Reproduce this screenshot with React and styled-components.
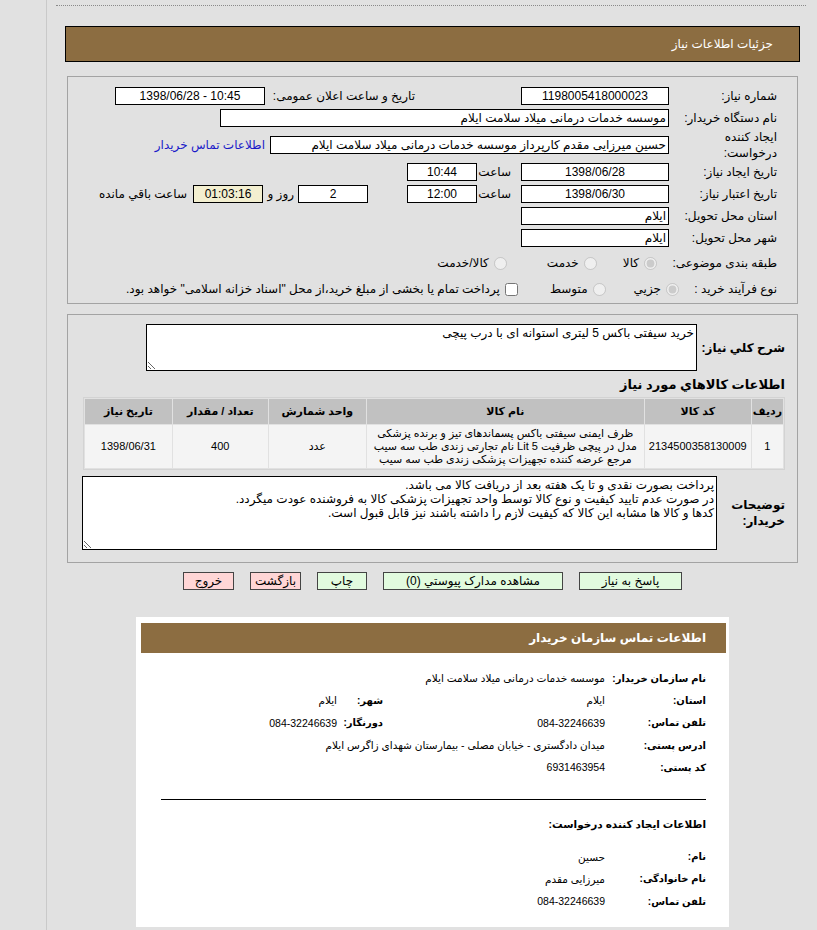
import React from 'react';
import styled, { createGlobalStyle } from 'styled-components';

const GlobalStyle = createGlobalStyle`
  body {
    margin: 0;
    background: #e1e1e1;
    font-family: "Liberation Sans", "DejaVu Sans", sans-serif;
    font-size: 12px;
    color: #000;
  }
`;

const Page = styled.div`
  margin-left: 46px;
  border-left: 1px solid #c9c9c9;
  min-height: 930px;
  padding: 5px 11px 8px 9px;
  box-sizing: border-box;
`;

const Dotted = styled.div`
  border-top: 1px dotted #8a8a8a;
`;

const Content = styled.div`
  margin: 0 8px 0 11px;
  direction: rtl;
`;

const TitleBar = styled.div`
  margin: 20px -2px 0 -2px;
  height: 34px;
  border: 1px solid #000;
  background: #8c6d41;
  color: #fff;
  display: flex;
  align-items: center;
  padding-right: 26px;
  font-size: 12px;
`;

const Panel = styled.div`
  margin-top: ${p => p.$top || 14}px;
  border: 1px solid #a3a3a3;
  padding: ${p => p.$pad};
`;

const Row = styled.div`
  display: flex;
  align-items: center;
  height: ${p => p.$h || 22}px;
`;

const Label = styled.div`
  width: ${p => p.$w || 108}px;
  flex-shrink: 0;
  line-height: 16px;
  white-space: ${p => (p.$wrap ? 'normal' : 'nowrap')};
  font-weight: ${p => (p.$bold ? 'bold' : 'normal')};
  font-size: 12px;
`;

const Field = styled.div`
  width: ${p => p.$w}px;
  height: 16px;
  line-height: 16px;
  border: 1px solid #000;
  background: ${p => p.$bg || '#fff'};
  text-align: ${p => p.$align || 'center'};
  padding: 0 2px;
  box-sizing: content-box;
  white-space: nowrap;
  overflow: hidden;
  flex-shrink: 0;
  margin-right: ${p => p.$mr || 0}px;
`;

const Text = styled.span`
  display: inline-block;
  flex-shrink: 0;
  width: ${p => (p.$w ? `${p.$w}px` : 'auto')};
  box-sizing: border-box;
  padding-right: ${p => p.$pr || 0}px;
  white-space: nowrap;
`;

const LinkText = styled.a`
  color: #1a1ac8;
  text-decoration: none;
  margin-right: 5px;
  white-space: nowrap;
`;

const Group = styled.div`
  width: ${p => p.$w}px;
  margin-right: ${p => p.$mr}px;
  display: flex;
  align-items: center;
  justify-content: space-between;
`;

const Choice = styled.label`
  display: flex;
  align-items: center;
  margin-right: ${p => p.$mr || 0}px;
  white-space: nowrap;
  input {
    margin: 0 0 0 5px;
  }
`;

const Area = styled.textarea`
  width: ${p => p.$w}px;
  height: ${p => p.$h}px;
  box-sizing: border-box;
  border: 1px solid #000;
  background: #fff;
  font-family: inherit;
  font-size: 12px;
  line-height: 14px;
  padding: 1px 2px;
  direction: rtl;
  resize: both;
  outline: none;
`;

const Heading = styled.div`
  font-weight: bold;
  font-size: 13px;
  margin: 6px 0 5px;
`;

const Table = styled.table`
  width: 702px;
  border-collapse: separate;
  border-spacing: 1px;
  border: 1px solid #d3d3d3;
  background: #e1e1e1;
  font-size: 11px;
`;

const Th = styled.th`
  background: #c1c1c1;
  height: 23px;
  font-weight: bold;
  width: ${p => p.$w}px;
`;

const Td = styled.td`
  background: #f4f4f4;
  text-align: center;
  height: 41px;
  line-height: 13px;
`;

const Buttons = styled.div`
  display: flex;
  justify-content: center;
  gap: 16px;
  margin-top: 9px;
`;

const Button = styled.button`
  width: ${p => p.$w}px;
  height: 18px;
  padding: 0;
  border: 1px solid #444;
  background: ${p => (p.$danger ? '#ffd6d6' : '#e2fbdf')};
  font-family: inherit;
  font-size: 12px;
  color: #000;
`;

const Card = styled.div`
  width: 593px;
  margin: 27px auto 0;
  background: #fff;
  padding: 6px 3px 15px 5px;
  box-sizing: border-box;
`;

const CardBar = styled.div`
  height: 30px;
  background: #8c6d41;
  color: #fff;
  font-weight: bold;
  font-size: 12px;
  display: flex;
  align-items: center;
  padding-right: 20px;
`;

const InfoGrid = styled.div`
  display: grid;
  grid-template-columns: 101px 222px 46px 1fr;
  grid-auto-rows: 22.3px;
  align-items: center;
  padding: 0 20px;
  margin-top: ${p => p.$top || 0}px;
`;

const Key = styled.div`
  font-weight: bold;
  font-size: 10px;
  white-space: nowrap;
`;

const Val = styled.div`
  grid-column: ${p => (p.$wide ? 'span 3' : 'auto')};
  white-space: nowrap;
  font-size: 10.5px;
`;

const Rule = styled.hr`
  margin: 21px 20px 0 20px;
  border: 0;
  border-top: 1px solid #000;
`;

const SubHead = styled.div`
  font-weight: bold;
  font-size: 10.5px;
  padding-right: 20px;
  margin-top: 18px;
`;

const notes = [
  'پرداخت بصورت نقدی و تا یک هفته بعد از دریافت کالا می باشد.',
  'در صورت عدم تایید کیفیت و نوع کالا توسط واحد تجهیزات پزشکی کالا به فروشنده عودت میگردد.',
  'کدها و کالا ها مشابه این کالا که کیفیت لازم را داشته باشند نیز قابل قبول است.',
].join('\n');

export default function App() {
  return (
    <>
      <GlobalStyle />
      <Page>
        <Dotted />
        <Content>
          <TitleBar>جزئیات اطلاعات نیاز</TitleBar>

          <Panel $pad="8px 20px 2px 0">
            <Row>
              <Label>شماره نیاز:</Label>
              <Field $w={142}>1198005418000023</Field>
              <Group $w={300} $mr={106}>
                <Text>تاریخ و ساعت اعلان عمومی:</Text>
                <Field $w={144} dir="ltr">1398/06/28 - 10:45</Field>
              </Group>
            </Row>
            <Row>
              <Label>نام دستگاه خریدار:</Label>
              <Field $w={443} $align="right">موسسه خدمات درمانی میلاد سلامت ایلام</Field>
            </Row>
            <Row $h={32}>
              <Label $wrap>ایجاد کننده<br />درخواست:</Label>
              <Field $w={393} $align="right">حسین میرزایی مقدم کارپرداز موسسه خدمات درمانی میلاد سلامت ایلام</Field>
              <LinkText href="#">اطلاعات تماس خریدار</LinkText>
            </Row>
            <Row>
              <Label>تاریخ ایجاد نیاز:</Label>
              <Field $w={142}>1398/06/28</Field>
              <Text $w={44} $pr={10}>ساعت</Text>
              <Field $w={64}>10:44</Field>
            </Row>
            <Row>
              <Label>تاریخ اعتبار نیاز:</Label>
              <Field $w={142}>1398/06/30</Field>
              <Text $w={44} $pr={10}>ساعت</Text>
              <Field $w={64}>12:00</Field>
              <Field $w={64} $mr={39}>2</Field>
              <Text $w={35} $pr={4}>روز و</Text>
              <Field $w={64} $bg="#f3efd0">01:03:16</Field>
              <Text $pr={6}>ساعت باقي مانده</Text>
            </Row>
            <Row>
              <Label>استان محل تحویل:</Label>
              <Field $w={142} $align="right">ایلام</Field>
            </Row>
            <Row>
              <Label>شهر محل تحویل:</Label>
              <Field $w={142} $align="right">ایلام</Field>
            </Row>
            <Row $h={28}>
              <Label>طبقه بندی موضوعی:</Label>
              <Choice $mr={12}><input type="radio" disabled defaultChecked />کالا</Choice>
              <Choice $mr={26}><input type="radio" disabled />خدمت</Choice>
              <Choice $mr={40}><input type="radio" disabled />کالا/خدمت</Choice>
            </Row>
            <Row $h={24}>
              <Label>نوع فرآیند خرید :</Label>
              <Choice $mr={-10}><input type="radio" disabled defaultChecked />جزيي</Choice>
              <Choice $mr={28}><input type="radio" disabled />متوسط</Choice>
              <Choice $mr={32}><input type="checkbox" />پرداخت تمام یا بخشی از مبلغ خرید،از محل "اسناد خزانه اسلامی" خواهد بود.</Choice>
            </Row>
          </Panel>

          <Panel $top={10} $pad="9px 12px 12px 14px">
            <Row $h={47}>
              <Label $w={88} $bold>شرح کلي نياز:</Label>
              <Area $w={551} $h={47} readOnly defaultValue="خرید سیفتی باکس 5 لیتری استوانه ای با درب پیچی" />
            </Row>
            <Heading>اطلاعات کالاهاي مورد نياز</Heading>
            <Table>
              <thead>
                <tr>
                  <Th $w={24}>ردیف</Th>
                  <Th $w={104}>کد کالا</Th>
                  <Th $w={275}>نام کالا</Th>
                  <Th $w={95}>واحد شمارش</Th>
                  <Th $w={93}>تعداد / مقدار</Th>
                  <Th>تاریخ نیاز</Th>
                </tr>
              </thead>
              <tbody>
                <tr>
                  <Td>1</Td>
                  <Td>2134500358130009</Td>
                  <Td>
                    ظرف ایمنی سیفتی باکس پسماندهای تیز و برنده پزشکی<br />
                    مدل در پیچی ظرفیت 5 Lit نام تجارتی زندی طب سه سیب<br />
                    مرجع عرضه کننده تجهیزات پزشکی زندی طب سه سیب
                  </Td>
                  <Td>عدد</Td>
                  <Td>400</Td>
                  <Td>1398/06/31</Td>
                </tr>
              </tbody>
            </Table>
            <Row $h={74} style={{ marginTop: 6 }}>
              <Label $w={68} $bold $wrap>توضیحات<br />خریدار:</Label>
              <Area $w={636} $h={74} readOnly defaultValue={notes} />
            </Row>
          </Panel>

          <Buttons>
            <Button $w={103}>پاسخ به نیاز</Button>
            <Button $w={180}>مشاهده مدارک پیوستي (0)</Button>
            <Button $w={50}>چاپ</Button>
            <Button $w={51} $danger>بازگشت</Button>
            <Button $w={51} $danger>خروج</Button>
          </Buttons>

          <Card>
            <CardBar>اطلاعات تماس سازمان خریدار</CardBar>
            <InfoGrid $top={14}>
              <Key>نام سازمان خریدار:</Key>
              <Val $wide>موسسه خدمات درمانی میلاد سلامت ایلام</Val>
              <Key>استان:</Key>
              <Val>ایلام</Val>
              <Key>شهر:</Key>
              <Val>ایلام</Val>
              <Key>تلفن تماس:</Key>
              <Val>084-32246639</Val>
              <Key>دورنگار:</Key>
              <Val>084-32246639</Val>
              <Key>ادرس پستی:</Key>
              <Val $wide>میدان دادگستری - خیابان مصلی - بیمارستان شهدای زاگرس ایلام</Val>
              <Key>کد پستی:</Key>
              <Val $wide>6931463954</Val>
            </InfoGrid>
            <Rule />
            <SubHead>اطلاعات ایجاد کننده درخواست:</SubHead>
            <InfoGrid $top={15}>
              <Key>نام:</Key>
              <Val $wide>حسین</Val>
              <Key>نام خانوادگی:</Key>
              <Val $wide>میرزایی مقدم</Val>
              <Key>تلفن تماس:</Key>
              <Val $wide>084-32246639</Val>
            </InfoGrid>
          </Card>
        </Content>
      </Page>
    </>
  );
}
